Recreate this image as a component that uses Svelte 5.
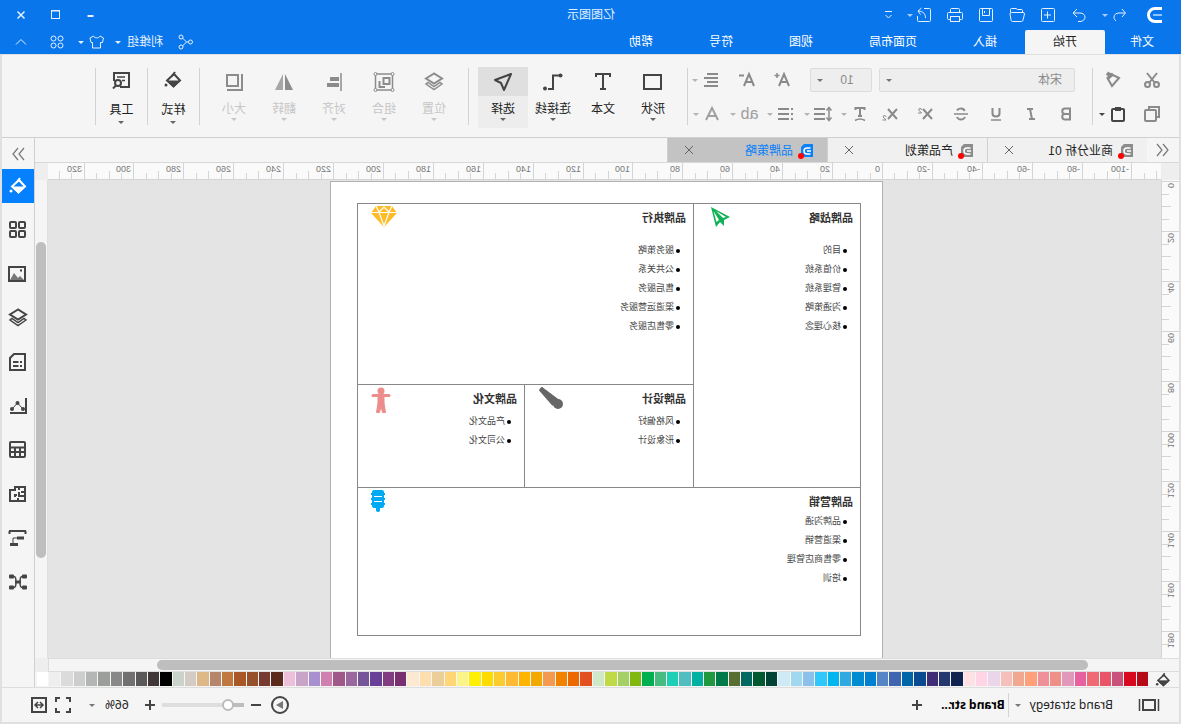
<script>
  const icons = {
    logo: '<path d="M1 1.500h7a6.500 6.500 0 0 1 0 13H1" stroke-width="3"/><path d="M1 8h9" stroke="#8cc4ff" stroke-width="2"/>',
    undo: '<path d="M7 3 3.500 7 7 11M4 7h6c3 0 5 1.800 5 4.200 0 1.600-.7 2.800-2 3.800"/>',
    redo: '<path d="m11 3 4 4-4 4M14.500 7H8C5 7 3 8.800 3 11.200 3 13.500 5 15.500 8 15.500h2"/>',
    add: '<rect x="2.500" y="2.500" width="13" height="13" rx="1"/><path d="M9.500 5.500v7M6 9h7"/>',
    open: '<path d="M3.500 7V4.500q0-1 1-1h4l1.500-1h4.500q1 0 1 1V6.500M3 6.500h11.500q1.500 0 1.500 1.500l-1 6q-.3 1.500-1.500 1.500h-9q-1.300 0-1.500-1.500L1.500 8q0-1.500 1.500-1.500Z"/>',
    save: '<rect x="2.500" y="2.500" width="13" height="13" rx="1"/><path d="M5.500 3v6.500h7V3M10.500 5v2"/>',
    print: '<path d="M4.500 6V3.500q0-1 1-1h7q1 0 1 1V6M4.500 13.500h-2q-1 0-1-1v-5q0-1 1-1h13q1 0 1 1v5q0 1-1 1h-2"/><rect x="4.500" y="10.500" width="9" height="5"/>',
    share: '<path d="M9 2.500H3.500q-1 0-1 1v11q0 1 1 1h11q1 0 1-1V10M7.500 12c0-4 2-6.500 7-7M11.500 2l3.500 3-2.500 3.500"/>',
    more: '<path d="M6 5.500h7M6.500 9l3 3 3-3"/>',
    minimize: '<path d="M6.500 10h6" stroke-width="2"/>',
    maximize: '<rect x="5.500" y="4.500" width="8" height="8"/><path d="M5.500 5h8"/>',
    close: '<path d="m5.500 5.500 7 7m0-7-7 7" stroke-width="1.500"/>',
    network: '<circle cx="4.500" cy="9" r="2"/><circle cx="14" cy="4" r="2"/><circle cx="14" cy="14" r="2"/><path d="M6.500 9h2l4-4M8.500 9l4 4"/>',
    shirt: '<path d="M6 3 2.500 5l1 4.500H5.500V15h8V9.500h1.500l1-4.500L12.500 3c-1 2.500-5.500 2.500-6.500 0Z"/>',
    command: '<circle cx="5.500" cy="5.500" r="2.500"/><circle cx="12.500" cy="5.500" r="2.500"/><circle cx="5.500" cy="12.500" r="2.500"/><circle cx="12.500" cy="12.500" r="2.500"/>',
    up: '<path d="m4 11.500 5-5 5 5"/>',

    cut: '<path d="m4 2 8 10M14 2 6 12" stroke-width="2"/><circle cx="4.500" cy="13.500" r="2.500" stroke-width="2"/><circle cx="13.500" cy="13.500" r="2.500" stroke-width="2"/>',
    brush: '<path d="m3 7 8-4 3 5-4 7Z" stroke-width="2"/><path d="m11 5 4-3" stroke-width="4"/><path d="m9 3 6 5" stroke-width="3"/>',
    copy: '<path d="M13 4V2H3v10h2" transform="translate(-1 0)" stroke-width="2"/><rect x="5" y="5" width="11" height="11" rx="1" stroke-width="2"/>',
    paste: '<rect x="3" y="4" width="12" height="12" rx="1" stroke-width="2"/><path d="M6 4h6" stroke-width="4"/>',
    bold: '<path d="M5 3.500h5a2.700 2.700 0 0 1 0 5.500H5Zm0 5.500h5.500a2.800 2.800 0 0 1 0 5.500H5Z" stroke-width="2"/>',
    italic: '<path d="M7 4h6M5 14h6M10 4 8 14" stroke-width="2"/>',
    underline: '<path d="M5.500 3v5.500q0 3 3.500 3t3.500-3V3" stroke-width="2"/><path d="M4 15h10" stroke-width="1.500"/>',
    strike: '<path d="M13 5.500Q12 3.500 9 3.500T5.500 6M5 12q1 2.500 4 2.500t4-2.500" stroke-width="2"/><path d="M2 9h14" stroke-width="1.500"/>',
    superscript: '<path d="m3 4 9 10M12 4 3 14" stroke-width="2"/><path d="M13.500 5q0-1.500 1.500-1.500t1.300 1.500L13.500 8H17"/>',
    subscript: '<path d="m3 4 9 10M12 4 3 14" stroke-width="2"/><path d="M14 12q0-1.500 1.500-1.500t1.300 1.500L14 15H17.500"/>',
    textArc: '<path d="M4.500 5V3h9v2M9 3v8M7 11h4" stroke-width="2"/><path d="M4 15.500q5-3 10 0" stroke-width="1.500"/>',
    lineHeight: '<path d="M3 3v12" stroke-width="1.500"/><path d="m.5 5.500 2.500-3 2.500 3m-5 7 2.500 3 2.500-3" stroke-width="1.500"/><path d="M7 4h11M7 9h11M7 14h11" stroke-width="2"/>',
    list: '<path d="M6 4h11M6 9h11M6 14h11" stroke-width="2"/><path d="M2 4h2M2 9h2M2 14h2" stroke-width="2"/>',
    fontUp: '<path d="M3 15 8 3 13 15M5 11h6" stroke-width="2"/><path d="M12.500 4.500h5M15 2v5" stroke-width="1.500"/>',
    fontDown: '<path d="M3 15 8 3 13 15M5 11h6" stroke-width="2"/><path d="M13 4.500h5" stroke-width="2"/>',
    alignLeft: '<path d="M3 4h11M3 8h14M3 12h11M3 16h14" transform="translate(-1 -1)" stroke-width="2"/>',
    fontColor: '<path d="M3 15 9 3l6 12M5 11h8" stroke-width="2"/>',

    shape: '<rect x="4" y="5" width="17" height="14" stroke-width="2"/>',
    text: '<path d="M5 7V4h14v3M12 4v15M9 19h6" stroke-width="2"/>',
    connector: '<path d="M6 5.500h6V19h5" stroke-width="2"/><circle cx="4.500" cy="5.500" r="2" fill="currentColor" stroke="none"/><circle cx="20" cy="18.500" r="2" fill="currentColor" stroke="none"/>',
    select: '<path d="m4 4 16 6-6 3-3 7Z" stroke-width="2" stroke-linejoin="round"/>',
    layers: '<path d="m12 3.500 8 5-8 5-8-5Z" stroke-width="2"/><path d="m4 14 8 5.500 8-5.500-2-1.500-6 4-6-4Z" stroke-width="1.500"/>',
    group: '<rect x="3.500" y="4" width="17" height="16" stroke-width="1.500"/><path d="M6.500 8h6v6h-6Z" stroke-width="2"/><path d="M11 17h5.500v-6" stroke-width="2"/><g fill="#f5f5f5"><circle cx="3.500" cy="4" r="1.500"/><circle cx="20.500" cy="4" r="1.500"/><circle cx="3.500" cy="20" r="1.500"/><circle cx="20.500" cy="20" r="1.500"/></g>',
    align: '<path d="M5 3v18" stroke-width="1.500"/><path d="M7 9h9M7 15h12" stroke-width="4"/>',
    flip: '<path d="M11 4v16H3Z" fill="currentColor" stroke="none"/><path d="M13 4v16h8Z" fill="currentColor" stroke="none" opacity=".75"/>',
    size: '<rect x="8" y="5" width="11" height="11" stroke-width="2"/><path d="M4 4v16h15" stroke-width="2"/>',
    bucket: '<path d="m11 6 7 6.500-6.500 6L5 12.500Z" stroke-width="2"/><path d="M5 13h13l-6.500 6Z" fill="currentColor"/><path d="m10 4 3 4" stroke-width="2"/><circle cx="19" cy="17" r="1.500" fill="currentColor" stroke="none"/>',
    tools: '<path d="M13 19H4V5h15v8" stroke-width="2"/><path d="M8 9h8M8 12.500h3" stroke-width="1.500"/><circle cx="15" cy="15" r="3" stroke-width="2"/><path d="m17 17.500 3 3" stroke-width="2"/>',

    library: '<g stroke-width="2"><rect x="5" y="4" width="6" height="6" rx="1"/><rect x="14" y="4" width="6" height="6" rx="1"/><rect x="5" y="13" width="6" height="6" rx="1"/><rect x="14" y="13" width="6" height="6" rx="1"/></g>',
    picture: '<rect x="5" y="5" width="16" height="14" stroke-width="2"/><path d="m6 18 4-4 2 2 4-5 4 7Z" fill="#777" stroke="none"/><path d="M8 8.500h2" stroke-width="2"/>',
    notes: '<path d="M5 4h11l4 4v12H5Z" stroke-width="2"/><path d="M8 12h2m1.500 0H17M8 16h2m1.500 0H17" stroke-width="1.800"/>',
    chart: '<path d="M4 4v15h16" stroke-width="2"/><path d="m7 15 5.500-6 5.500 6"/><g fill="currentColor" stroke="none"><circle cx="7" cy="15" r="2"/><circle cx="12.500" cy="9" r="2"/><circle cx="18" cy="15" r="2"/></g>',
    table: '<rect x="5" y="4" width="15" height="15" rx="1" stroke-width="2"/><path d="M5 9.500h15M5 14h15M10 10v9M15 10v9" stroke-width="2"/>',
    plan: '<path d="M5 5h10v3h5v11H5Z" stroke-width="2"/><path d="M5 10h4m2 0v4H5m6-6V5m2 8h3m-1-1v3m-3 4v-3" stroke-width="2"/>',
    timeline: '<path d="M4 5h17M4.500 5v3M20.500 5v3" stroke-width="2"/><path d="M6 12h7M12 18.500h8" stroke-width="3"/><path d="M13 12h4v6"/>',
    mindmap: '<path d="M6 6.500h2q2 0 2 5.500h4q0-5.500 2-5.500h2M6 17.500h2q2 0 2-5.500m4 0q0 5.500 2 5.500h2" stroke-width="1.500"/><g fill="currentColor" stroke="none"><rect x="3" y="4.500" width="5" height="4" rx="1"/><rect x="16" y="4.500" width="5" height="4" rx="1"/><rect x="3" y="15.500" width="5" height="4" rx="1"/><rect x="16" y="15.500" width="5" height="4" rx="1"/><rect x="9" y="10.500" width="6" height="3"/></g>',

    pages: '<rect x="6" y="7" width="12" height="10" stroke-width="2"/><path d="M2.500 6v12M21.500 6v12" stroke-width="1.500"/>',
    plus: '<path d="M12 7v10M7 12h10" stroke-width="2"/>',
    minus: '<path d="M7 12h10" stroke-width="2"/>',
    play: '<circle cx="12" cy="12" r="8" stroke-width="2"/><path d="m9 8 7 4-7 4Z" fill="#777" stroke="none"/>',
    full: '<path d="M5 9V5h4m6 0h4v4m0 6v4h-4m-6 0H5v-4" stroke-width="2"/>',
    fit: '<rect x="5" y="5" width="14" height="14" stroke-width="2"/><path d="M8 12h8m-5-3-3 3 3 3m2-6 3 3-3 3" stroke-width="1.500"/>',
    doc: '<path d="M1 1h9l3 3v10H1Z" fill="currentColor" stroke="none"/><path d="M3.500 5H7q3 0 3 3t-3 3H3.500M3 8h4" stroke="#fff" stroke-width="1.500"/><circle cx="13" cy="13" r="3" fill="#f00" stroke="none"/>',
    dblRight: '<path d="m3 3 5 6-5 6m6-12 5 6-5 6" stroke-width="1.200"/>',
    dblLeft: '<path d="m9 3-5 6 5 6m6-12-5 6 5 6" stroke-width="1.200"/>',

    plane: '<path d="M20 1 1 11l6 3v6l4-4 4 5Z" fill="#0fb257" stroke="none"/><path d="M15 5 5 11l3 1Z" fill="#fff" stroke="none"/><path d="m17.500 5-3 11-2.500-2Z" fill="#fff" stroke="none"/>',
    diamond: '<path d="M5 0h16l5 7-13 14L0 7Z" fill="#fdbc27" stroke="none"/><path d="M0 6.500h26M5 0l3 6 5-5 5 5 3-6M8 6.500 13 20l5-13.500" stroke="#fff" stroke-width="1.200"/>',
    spoon: '<path d="M25 4 23 1 6 12l5 6Z" fill="#666" stroke="#666" stroke-width="1" stroke-linejoin="round" transform="rotate(-4 13 11)"/><circle cx="6" cy="17" r="5" fill="#666" stroke="none"/>',
    person: '<circle cx="10" cy="4" r="3.500" fill="#ed8d8b" stroke="none"/><path d="M2 8.500h16" stroke="#ed8d8b" stroke-width="3" stroke-linecap="round"/><path d="M7 8h6v8l1.500 9.500h-3L10 19l-1.500 6.500h-3L7 16Z" fill="#ed8d8b" stroke="#ed8d8b" stroke-width="1" stroke-linejoin="round"/>',
    lamp: '<path d="M1 2q0-2 2-2h8q2 0 2 2v14q0 2-2 2H9v3q-2 2-4 0v-3H3q-2 0-2-2Z" fill="#00a9f4" stroke="none"/><path d="M0 4h14M0 9h14M0 14h14" stroke="#00a9f4" stroke-width="2"/><path d="M3 6.500h8m-8 5h8" stroke="#fff"/>'
  };

  const quick = [
    ['undo', '撤销', true],
    ['redo', '重做'],
    ['add', '新建'],
    ['open', '打开'],
    ['save', '保存'],
    ['print', '打印'],
    ['share', '导出', true]
  ];
  const menus = ['文件', '开始', '插入', '页面布局', '视图', '符号', '帮助'];

  const formats = [
    ['bold', '加粗'],
    ['italic', '斜体'],
    ['underline', '下划线'],
    ['strike', '删除线'],
    ['superscript', '上标'],
    ['subscript', '下标']
  ];
  const tools = [
    ['shape', '形状'],
    ['text', '文本'],
    ['connector', '连接线'],
    ['select', '选择']
  ];
  const arrange = [
    ['layers', '位置'],
    ['group', '组合'],
    ['align', '对齐'],
    ['flip', '翻转'],
    ['size', '大小']
  ];

  const files = ['商业分析 01', '产品策划', '品牌策略'];
  const panels = [
    ['bucket', '填充'],
    ['library', '符号库'],
    ['picture', '图片'],
    ['layers', '图层'],
    ['notes', '备注'],
    ['chart', '图表'],
    ['table', '表格'],
    ['plan', '平面图'],
    ['timeline', '时间线'],
    ['mindmap', '导图']
  ];

  const cells = [
    { area: 'strategy', title: '品牌战略', icon: 'plane', w: 20, h: 22, items: ['目的', '价值系统', '管理系统', '沟通策略', '核心理念'] },
    { area: 'action', title: '品牌执行', icon: 'diamond', w: 26, h: 22, items: ['服务策略', '公共关系', '售后服务', '渠道运营服务', '零售店服务'] },
    { area: 'design', title: '品牌设计', icon: 'spoon', w: 26, h: 23, items: ['风格偏好', '形象设计'] },
    { area: 'culture', title: '品牌文化', icon: 'person', w: 20, h: 27, items: ['产品文化', '公司文化'] },
    { area: 'market', title: '品牌营销', icon: 'lamp', w: 14, h: 23, items: ['品牌沟通', '渠道营销', '零售商店管理', '培训'] }
  ];

  const swatches = (
    'b50a18 d7091f c8527a e85568 ee6b74 e7609f e298b8 ee9088 f09099 ffa07a f0a890 f5bfbc ebd5e8 ffd5e5 ffe0e5 ' +
    '0f2250 243870 402d75 094a90 0066a8 3f64b0 5585c5 0080d0 008cd0 30a8e0 00b5f0 30c8fa 8ac0ea a0d8ef cfeaf5 ' +
    '004235 005830 006860 586d30 007a48 1f9840 00b0a0 50bec0 1ccfb5 48bb80 00b050 80b810 a5d065 c0da45 cfe8ca ' +
    'e35020 ee6800 f08200 f39a50 f3a800 ffb400 ffba35 fbcb30 ffdc00 fff000 fcf488 ffd575 ebce98 ffdeae fde8d0 ' +
    '7a3070 823c80 684098 755598 9a689f a0588a d080b0 a890d0 c8a5c8 ecc0da ' +
    '5c2a1c 763a30 96502a aa5728 c07840 b5866c deb887 d5cbc5 c9d3ca 000000 ' +
    '403838 5a5858 707070 888888 9c9e9c b4b6b5 cccdcc dbdbdb eeeeee ffffff'
  ).split(' ');

  // four ticks per 20 units, every fourth one carries a number
  function makeTicks(from, to, origin, step) {
    const list = [];
    for (let k = from; k <= to; k++) {
      list.push({
        pos: origin + Math.round(k * step),
        len: k % 4 === 0 ? 17 : k % 2 === 0 ? 9 : 7,
        label: k % 4 === 0 ? k * 5 : null
      });
    }
    return list;
  }

  const hTicks = makeTicks(-22, 66, 279, 12.475);
  const vTicks = makeTicks(0, 37, 1, 12.5);

  let menu = $state('开始');
  let tool = $state('select');
  let file = $state('品牌策略');
  let panel = $state('bucket');
  let zoom = $state(14);
</script>

{#snippet icon(name, w = 18, h = w)}
  <svg class="icon" width={w} height={h} viewBox="0 0 {w} {h}" aria-hidden="true">{@html icons[name]}</svg>
{/snippet}

<div class="window">
  <header>
    <div class="title-row">
      <span class="logo">{@render icon('logo', 18, 16)}</span>
      <div class="quick">
        {#each quick as [name, label, caret]}
          <button aria-label={label}>{@render icon(name)}</button>
          {#if caret}<i class="caret"></i>{/if}
        {/each}
        <button aria-label="更多">{@render icon('more')}</button>
      </div>
      <h1>亿图图示</h1>
      <div class="controls">
        <button aria-label="最小化">{@render icon('minimize')}</button>
        <button aria-label="最大化">{@render icon('maximize')}</button>
        <button aria-label="关闭">{@render icon('close')}</button>
      </div>
    </div>
    <div class="menu-row">
      <nav>
        {#each menus as item}
          <button class:active={menu === item} onclick={() => (menu = item)}>{item}</button>
        {/each}
      </nav>
      <div class="account">
        <button aria-label="分享">{@render icon('network')}</button>
        <button class="user">利维组<i class="caret"></i></button>
        <button class="skin" aria-label="皮肤">{@render icon('shirt')}<i class="caret"></i></button>
        <button aria-label="应用">{@render icon('command')}</button>
        <button aria-label="收起">{@render icon('up')}</button>
      </div>
    </div>
  </header>

  <div class="body">
    <div class="ribbon">
      <div class="clipboard">
        <button aria-label="剪切">{@render icon('cut')}</button>
        <button aria-label="格式刷">{@render icon('brush')}</button>
        <button aria-label="复制">{@render icon('copy')}</button>
        <button class="paste" aria-label="粘贴">{@render icon('paste')}<i class="caret"></i></button>
      </div>
      <div class="sep"></div>
      <div class="font">
        <div class="row">
          <div class="field family">
            <select aria-label="字体"><option>宋体</option></select>
            <i class="caret"></i>
          </div>
          <div class="field points">
            <select aria-label="字号"><option>10</option></select>
            <i class="caret"></i>
          </div>
          <button class="step" aria-label="增大字号">{@render icon('fontUp')}</button>
          <button class="step" aria-label="减小字号">{@render icon('fontDown')}</button>
          <button class="drop last" aria-label="对齐方式">{@render icon('alignLeft')}<i class="caret"></i></button>
        </div>
        <div class="row">
          {#each formats as [name, label]}
            <button class="format" aria-label={label}>{@render icon(name)}</button>
          {/each}
          <button class="drop" aria-label="文本弧">{@render icon('textArc')}<i class="caret"></i></button>
          <button class="drop" aria-label="行距">{@render icon('lineHeight')}<i class="caret"></i></button>
          <button class="drop" aria-label="列表">{@render icon('list')}<i class="caret"></i></button>
          <button class="drop pale"><span class="ab">ab</span><i class="caret"></i></button>
          <button class="drop pale" aria-label="字体颜色">{@render icon('fontColor')}<i class="caret"></i></button>
        </div>
      </div>
      <div class="sep"></div>
      <div class="big-group">
        {#each tools as [name, label]}
          <button class="big" class:active={tool === name} onclick={() => (tool = name)}>
            <span class="pic">{@render icon(name, 24)}</span>
            {label}
            {#if name !== 'text'}<i class="caret"></i>{/if}
          </button>
        {/each}
      </div>
      <div class="sep"></div>
      <div class="big-group">
        {#each arrange as [name, label]}
          <button class="big" disabled>
            <span class="pic">{@render icon(name, 24)}</span>
            {label}
            <i class="caret"></i>
          </button>
        {/each}
      </div>
      <div class="sep"></div>
      <button class="big tall">
        <span class="pic">{@render icon('bucket', 24)}</span>
        样式
        <i class="caret"></i>
      </button>
      <div class="sep"></div>
      <button class="big tall">
        <span class="pic">{@render icon('tools', 24)}</span>
        工具
        <i class="caret"></i>
      </button>
      <div class="sep"></div>
    </div>

    <div class="main">
      <div class="workspace">
        <div class="tabs">
          <button class="expand" aria-label="展开符号库">{@render icon('dblRight')}</button>
          {#each files as name}
            <div class="tab" class:active={file === name}>
              <button class="name" onclick={() => (file = name)}>
                {@render icon('doc', 18, 16)}
                {name}
              </button>
              <button class="shut" aria-label="关闭{name}">
                <svg class="icon" width="8" height="8" viewBox="0 0 8 8"><path d="m0 0 8 8m0-8-8 8" /></svg>
              </button>
            </div>
          {/each}
        </div>

        <div class="board">
          <div class="corner"></div>
          <div class="h-ruler">
            <svg width="100%" height="16">
              {#each hTicks as tick}
                <line x1={tick.pos} x2={tick.pos} y1={17 - tick.len} y2="17" />
                {#if tick.label !== null}
                  <text x={tick.pos + 2} y="9">{tick.label}</text>
                {/if}
              {/each}
            </svg>
          </div>
          <div class="corner"></div>

          <div class="v-ruler">
            <svg width="17" height="100%">
              {#each vTicks as tick}
                <line x1={17 - tick.len} x2="17" y1={tick.pos} y2={tick.pos} />
                {#if tick.label !== null}
                  <text transform="translate(11 {tick.pos + 2}) rotate(-90)" text-anchor="end">{tick.label}</text>
                {/if}
              {/each}
            </svg>
          </div>
          <div class="canvas">
            <div class="page">
              <div class="frame">
                {#each cells as cell}
                  <section class="cell {cell.area}">
                    <div>
                      <h2>{cell.title}</h2>
                      <ul>
                        {#each cell.items as item}
                          <li>{item}</li>
                        {/each}
                      </ul>
                    </div>
                    {@render icon(cell.icon, cell.w, cell.h)}
                  </section>
                {/each}
              </div>
            </div>
          </div>
          <div class="v-scroll"><div class="thumb"></div></div>

          <div class="h-scroll"><div class="thumb"></div></div>
          <div class="corner"></div>
        </div>

        <div class="palette">
          <button aria-label="填充颜色">{@render icon('bucket', 24)}</button>
          <div class="swatches">
            {#each swatches as color}
              <span style="background: #{color}"></span>
            {/each}
          </div>
        </div>
      </div>

      <aside>
        <button class="collapse" aria-label="收起面板">{@render icon('dblLeft')}</button>
        {#each panels as [name, label]}
          <button class="panel" class:active={panel === name} aria-label={label} onclick={() => (panel = name)}>
            {@render icon(name, 24)}
          </button>
        {/each}
      </aside>
    </div>

    <footer>
      <button class="all-pages" aria-label="页面列表">{@render icon('pages', 24)}</button>
      <button class="page-name">Brand strategy<i class="caret"></i></button>
      <button class="page-tab">Brand str...</button>
      <button aria-label="新建页面">{@render icon('plus', 24)}</button>
      <div class="view">
        <button aria-label="演示">{@render icon('play', 24)}</button>
        <button aria-label="缩小">{@render icon('minus', 24)}</button>
        <input type="range" aria-label="缩放" min="0" max="100" bind:value={zoom} />
        <button aria-label="放大">{@render icon('plus', 24)}</button>
        <button class="percent">66%<i class="caret"></i></button>
        <button aria-label="全屏">{@render icon('full', 24)}</button>
        <button aria-label="适应宽度">{@render icon('fit', 24)}</button>
      </div>
    </footer>
  </div>
</div>

<style>
  :global(body) {
    overflow: hidden;
  }

  .window {
    display: flex;
    flex-direction: column;
    height: 100vh;
    font: 12px/16px "Liberation Sans", "Noto Sans CJK SC", sans-serif;
    color: #222;
    background: #f5f5f5;
    transform: scaleX(-1);
  }

  button {
    display: flex;
    align-items: center;
    justify-content: center;
    padding: 0;
    border: 0;
    background: none;
    color: inherit;
    font: inherit;
    white-space: nowrap;
  }

  .icon {
    display: block;
    flex: none;
    fill: none;
    stroke: currentColor;
  }

  .caret {
    flex: none;
    border: 3px solid transparent;
    border-top-color: currentColor;
    border-bottom: 0;
  }

  /* title bar */
  header {
    background: #0976ec;
    color: #e6f1ff;
  }

  .title-row {
    display: grid;
    grid-template-columns: 51px 1fr auto 1fr;
    align-items: center;
    height: 30px;
  }

  .logo {
    margin-left: 18px;
    color: #fff;
  }

  .quick {
    display: flex;
    align-items: center;
  }

  .quick button {
    width: 31px;
  }

  .quick button:first-child {
    width: 20px;
  }

  .quick .caret {
    margin: 0 7px 0 2px;
    opacity: 0.7;
  }

  .quick .caret:last-of-type {
    margin: 0 2px 0 -4px;
  }

  .title-row h1 {
    margin: 0 26px 0 -26px;
    font-size: 12px;
    font-weight: 400;
  }

  .controls {
    display: flex;
    justify-content: flex-end;
    gap: 17px;
    padding-right: 12px;
  }

  .menu-row {
    display: flex;
    justify-content: space-between;
    height: 24px;
  }

  nav {
    display: flex;
  }

  nav button {
    padding: 0 28px;
    color: #fff;
  }

  nav button:first-child {
    padding: 0 25px 0 27px;
  }

  nav button.active {
    background: #f5f5f5;
    color: #222;
    border-radius: 2px 2px 0 0;
  }

  .account {
    display: flex;
    align-items: center;
    padding-right: 12px;
  }

  .account .user {
    gap: 6px;
    margin: 0 9px 0 14px;
  }

  .account .skin {
    gap: 4px;
    margin-right: 12px;
  }

  .account button:last-child {
    margin-left: 18px;
  }

  /* body */
  .body {
    flex: 1;
    display: flex;
    flex-direction: column;
    min-height: 0;
    border: 2px solid #e0e0e0;
    border-top-width: 1px;
  }

  .ribbon {
    display: flex;
    align-items: flex-start;
    height: 70px;
    padding-top: 12px;
    border-bottom: 1px solid #d0d0d0;
    color: #8a8a8a;
  }

  .sep {
    flex: none;
    width: 1px;
    height: 57px;
    margin-top: 1px;
    background: #d2d2d2;
  }

  .clipboard {
    display: grid;
    grid-template-columns: 40px 38px;
    grid-auto-rows: 24px;
    row-gap: 10px;
    padding: 1px 1px 0 7px;
  }

  .clipboard .paste {
    gap: 4px;
    color: #444;
  }

  .font {
    display: flex;
    flex-direction: column;
    gap: 10px;
    width: 396px;
    padding: 1px 0 0 8px;
  }

  .row {
    display: flex;
    height: 24px;
  }

  .field {
    display: flex;
    align-items: center;
    box-sizing: border-box;
    padding-right: 6px;
    border: 1px solid #dcdcdc;
    border-radius: 2px;
    background: #eee;
    color: #777;
  }

  .field select {
    flex: 1;
    min-width: 0;
    height: 22px;
    padding: 0 12px;
    border: 0;
    appearance: none;
    background: none;
    color: #8a8a8a;
    font: inherit;
  }

  .family {
    width: 196px;
    margin: 0 7px 0 9px;
  }

  .points {
    width: 62px;
    margin-right: 9px;
  }

  .points select {
    padding: 0;
    text-align: center;
  }

  .step {
    width: 35px;
  }

  .format {
    width: 35px;
  }

  .drop {
    gap: 4px;
    width: 37px;
  }

  .drop .caret {
    color: #b4b4b4;
  }

  .drop.last {
    margin-left: auto;
  }

  .drop.pale {
    color: #a0a0a0;
  }

  .ab {
    width: 18px;
    font-size: 16px;
  }

  .big-group {
    display: flex;
    padding: 0 9px;
  }

  .big {
    flex-direction: column;
    justify-content: flex-start;
    width: 50px;
    height: 61px;
    color: #222;
  }

  .big .pic {
    display: flex;
    align-items: center;
    justify-content: center;
    width: 100%;
    height: 29px;
    margin-bottom: 5px;
    color: #444;
  }

  .big .caret {
    margin-top: 1px;
    color: #666;
  }

  .big.active {
    background: #ededed;
    border-radius: 2px;
  }

  .big.active .pic {
    background: #dfdfdf;
  }

  .big:disabled,
  .big:disabled .caret {
    color: #c6c6c6;
  }

  .big:disabled .pic {
    color: #8c8c8c;
  }

  .big.tall {
    width: 51px;
  }

  .big.tall .pic {
    height: 26px;
    margin-bottom: 9px;
  }

  .big.tall .caret {
    margin-top: 3px;
  }

  .main {
    flex: 1;
    display: flex;
    min-height: 0;
  }

  .workspace {
    flex: 1;
    display: flex;
    flex-direction: column;
    min-width: 0;
  }

  .tabs {
    display: flex;
    height: 24px;
    border-bottom: 1px solid #d8d8d8;
  }

  .expand {
    width: 32px;
    color: #777;
    transform: scaleX(-1);
  }

  .tab {
    display: flex;
    justify-content: space-between;
    box-sizing: border-box;
    width: 160px;
    padding: 0 17px 0 13px;
    border-right: 1px solid #d0d0d0;
    background: #f0f0f0;
  }

  .tab .name {
    gap: 3px;
    padding-top: 2px;
  }

  .tab .icon {
    color: #8c8c8c;
  }

  .tab .shut .icon {
    color: #666;
  }

  .tab.active {
    background: #c3c3c3;
    color: #0a80fa;
  }

  .tab.active .name .icon {
    color: #0a80fa;
  }

  .board {
    flex: 1;
    display: grid;
    grid-template: 17px minmax(0, 1fr) 14px / 18px minmax(0, 1fr) 13px;
    min-height: 0;
  }

  .corner {
    background: #eee;
  }

  .h-ruler,
  .v-ruler {
    overflow: hidden;
    background: #fafafa;
  }

  .h-ruler {
    border-bottom: 1px solid #d4d4d4;
  }

  .v-ruler {
    border-right: 1px solid #d4d4d4;
  }

  .board svg {
    display: block;
  }

  line {
    stroke: #d4d4d4;
    shape-rendering: crispEdges;
  }

  text {
    fill: #777;
    font-size: 9px;
  }

  .canvas {
    display: flex;
    justify-content: center;
    overflow: hidden;
    padding: 1px 4px 0 0;
    background: #e4e4e4;
  }

  .page {
    padding: 21px 26px 0 21px;
    border: 1px solid #b0b0b0;
    border-bottom: 0;
    background: #fff;
  }

  .frame {
    display: grid;
    grid-template-columns: 167px 169px 167px;
    grid-template-rows: 181px 103px 148px;
    grid-template-areas:
      'strategy action action'
      'strategy design culture'
      'market market market';
    border: 1px solid #888;
    border-width: 1px 0 0 1px;
  }

  .cell {
    display: flex;
    justify-content: space-between;
    align-items: flex-start;
    padding: 2px 13px 0 7px;
    border: 1px solid #888;
    border-width: 0 1px 1px 0;
  }

  .strategy {
    grid-area: strategy;
    padding-right: 17px;
  }

  .action {
    grid-area: action;
  }

  .design {
    grid-area: design;
  }

  .culture {
    grid-area: culture;
  }

  .market {
    grid-area: market;
  }

  .cell h2 {
    margin: 2px 0 3px;
    font-size: 11px;
    line-height: 20px;
    color: #333;
  }

  .strategy h2,
  .action h2 {
    margin-bottom: 13px;
  }

  .market h2 {
    margin-bottom: 0;
  }

  ul {
    margin: 0;
    padding: 0;
    list-style: none;
    font-size: 9px;
    line-height: 19px;
    color: #444;
  }

  li {
    display: flex;
    align-items: center;
    gap: 2px;
    padding-left: 6px;
  }

  li::before {
    content: '';
    width: 4px;
    height: 4px;
    border-radius: 50%;
    background: #000;
  }

  .v-scroll {
    display: grid;
    grid-template-rows: 13fr 66fr 21fr;
    padding: 0 1px;
    border-left: 1px solid #e0e0e0;
  }

  .h-scroll {
    grid-column: span 2;
    display: grid;
    grid-template-columns: 17fr 173fr 20fr;
    padding: 1px 0;
    border: 1px solid #ddd;
    border-left: 0;
  }

  .thumb {
    border-radius: 5px;
    background: #bebebe;
  }

  .v-scroll .thumb {
    grid-row: 2;
  }

  .h-scroll .thumb {
    grid-column: 2;
  }

  .palette {
    display: flex;
    height: 15px;
    padding-right: 1px;
  }

  .palette button {
    width: 31px;
    color: #444;
  }

  .palette .icon {
    width: 20px;
    height: 20px;
  }

  .swatches {
    flex: 1;
    display: flex;
    gap: 1px;
    height: 14px;
  }

  .swatches span {
    flex: 1;
  }

  aside {
    display: flex;
    flex-direction: column;
    width: 32px;
    border-left: 1px solid #d0d0d0;
    color: #444;
  }

  .collapse {
    height: 31px;
    color: #777;
    transform: scaleX(-1);
  }

  .panel {
    height: 34px;
    margin-bottom: 10px;
  }

  .panel.active {
    background: #0580ff;
    color: #fff;
  }

  footer {
    display: flex;
    align-items: center;
    height: 34px;
    border-top: 1px solid #ddd;
    color: #444;
    font-family: "Noto Sans", "Noto Sans CJK SC", sans-serif;
  }

  .all-pages {
    margin-left: 18px;
  }

  .page-name {
    gap: 9px;
    margin: 0 6px 0 24px;
    color: #222;
  }

  .page-name .caret,
  .percent .caret {
    color: #777;
  }

  .page-tab {
    height: 24px;
    margin-right: 12px;
    padding-left: 3px;
    border-left: 1px solid #d4d4d4;
    color: #000;
    font-weight: 700;
  }

  .view {
    display: flex;
    align-items: center;
    margin-left: auto;
    padding-right: 25px;
  }

  .view input {
    width: 82px;
    height: 12px;
    margin: 0;
    appearance: none;
    border-radius: 2px;
    background: linear-gradient(90deg, #bdbdbd 20%, #dedede 20%) center / 100% 4px no-repeat;
  }

  .view input::-webkit-slider-thumb {
    box-sizing: border-box;
    width: 12px;
    height: 12px;
    appearance: none;
    border: 2px solid #bbb;
    border-radius: 50%;
    background: #fff;
  }

  .percent {
    gap: 10px;
    margin: 0 14px 0 9px;
    color: #222;
  }
</style>
